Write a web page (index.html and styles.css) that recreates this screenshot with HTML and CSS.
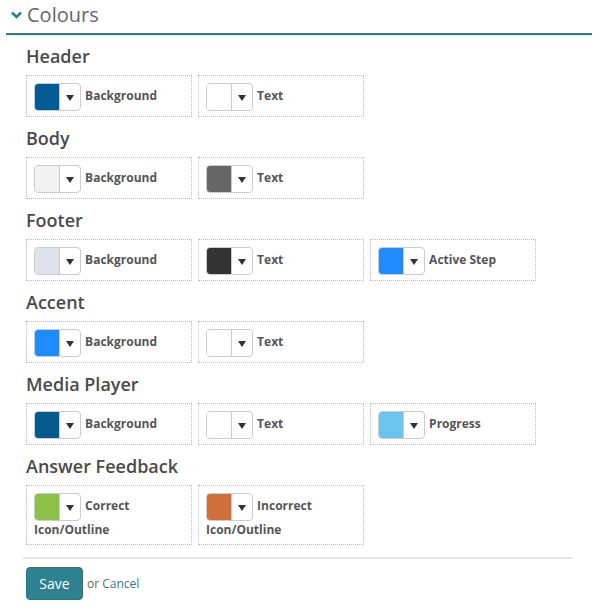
FILE: index.html
```html
<!DOCTYPE html>
<html lang="en">
<head>
    <meta charset="UTF-8">
    <title>Theme colours</title>
    <link rel="stylesheet" href="styles.css">
</head>
<body>
    <div class="panel">
        <div class="panel-title">
            <svg class="chevron" width="11" height="8" viewBox="0 0 11 8">
                <path d="M1 1.5 L5.5 6 L10 1.5" fill="none" stroke="#2a7f8f" stroke-width="2.6"/>
            </svg>
            Colours
        </div>

        <form class="panel-body">
            <div class="group">
                <h3>Header</h3>
                <div class="row">
                    <div class="pick"><span class="swatch"><span class="chip" style="background:#035b94"></span><span class="drop"></span></span> Background</div>
                    <div class="pick"><span class="swatch"><span class="chip" style="background:#ffffff"></span><span class="drop"></span></span> Text</div>
                </div>
            </div>

            <div class="group">
                <h3>Body</h3>
                <div class="row">
                    <div class="pick"><span class="swatch"><span class="chip" style="background:#f2f2f2"></span><span class="drop"></span></span> Background</div>
                    <div class="pick"><span class="swatch"><span class="chip" style="background:#666666"></span><span class="drop"></span></span> Text</div>
                </div>
            </div>

            <div class="group">
                <h3>Footer</h3>
                <div class="row">
                    <div class="pick"><span class="swatch"><span class="chip" style="background:#dde3eb"></span><span class="drop"></span></span> Background</div>
                    <div class="pick"><span class="swatch"><span class="chip" style="background:#333333"></span><span class="drop"></span></span> Text</div>
                    <div class="pick"><span class="swatch"><span class="chip" style="background:#1e8cff"></span><span class="drop"></span></span> Active Step</div>
                </div>
            </div>

            <div class="group">
                <h3>Accent</h3>
                <div class="row">
                    <div class="pick"><span class="swatch"><span class="chip" style="background:#1e8cff"></span><span class="drop"></span></span> Background</div>
                    <div class="pick"><span class="swatch"><span class="chip" style="background:#ffffff"></span><span class="drop"></span></span> Text</div>
                </div>
            </div>

            <div class="group">
                <h3>Media Player</h3>
                <div class="row">
                    <div class="pick"><span class="swatch"><span class="chip" style="background:#045a8d"></span><span class="drop"></span></span> Background</div>
                    <div class="pick"><span class="swatch"><span class="chip" style="background:#ffffff"></span><span class="drop"></span></span> Text</div>
                    <div class="pick"><span class="swatch"><span class="chip" style="background:#6cc3ee"></span><span class="drop"></span></span> Progress</div>
                </div>
            </div>

            <div class="group feedback">
                <h3>Answer Feedback</h3>
                <div class="row">
                    <div class="pick"><span class="swatch"><span class="chip" style="background:#8cc14a"></span><span class="drop"></span></span> Correct Icon/Outline</div>
                    <div class="pick"><span class="swatch"><span class="chip" style="background:#cf6f3c"></span><span class="drop"></span></span> Incorrect Icon/Outline</div>
                </div>
            </div>

            <div class="actions">
                <button type="submit">Save</button>
                <span class="or">or <a href="#">Cancel</a></span>
            </div>
        </form>
    </div>
</body>
</html>
```

FILE: styles.css
```css
body {
    font-family: "Open Sans", "Segoe UI", sans-serif;
    background-color: #ffffff;
    margin: 0;
    padding: 0;
}

.panel-title {
    display: flex;
    align-items: center;
    gap: 5px;
    height: 28px;
    margin: 0 8px 0 6px;
    padding-left: 5px;
    padding-bottom: 5px;
    font-size: 20px;
    color: #666;
    border-bottom: 2px solid #2a7f8f;
}

.chevron {
    margin-top: 1px;
}

.panel-body {
    padding: 0 28px 0 26px;
}

.group h3 {
    margin: 9px 0 7px;
    line-height: 24px;
    font-size: 18px;
    font-weight: 600;
    color: #4a4a4a;
}

.row {
    display: flex;
    gap: 6px;
    align-items: flex-start;
}

.pick {
    box-sizing: border-box;
    width: 166px;
    height: 42px;
    padding: 7px 7px 0;
    border: 1px dotted #bbb;
    font-size: 12px;
    font-weight: 700;
    line-height: 18px;
    color: #555;
}

.feedback .pick {
    height: 60px;
}

.swatch {
    display: inline-flex;
    vertical-align: middle;
    box-sizing: border-box;
    width: 47px;
    height: 28px;
    margin-right: 1px;
    border: 1px solid #ccc;
    border-radius: 4px;
    overflow: hidden;
    background: #fff;
}

.chip {
    width: 24px;
}

.drop {
    flex: 1;
    display: flex;
    align-items: center;
    justify-content: center;
    border-left: 1px solid #ccc;
}

.drop::after {
    content: "";
    border-top: 6px solid #333;
    border-left: 4px solid transparent;
    border-right: 4px solid transparent;
    margin-top: 2px;
}

.actions {
    margin-top: 12px;
    margin-left: -3px;
    padding: 8px 0 0 3px;
    border-top: 2px solid #e6e6e6;
    display: flex;
    align-items: center;
    gap: 4px;
}

button {
    width: 57px;
    height: 33px;
    background-color: #2e8190;
    border: 1px solid #2a7482;
    border-radius: 4px;
    color: white;
    font-family: "Open Sans", "Segoe UI", sans-serif;
    font-size: 14px;
    cursor: pointer;
}

.or {
    font-size: 12px;
    color: #666;
}

.or a {
    color: #2a7f8f;
    text-decoration: none;
}
```
